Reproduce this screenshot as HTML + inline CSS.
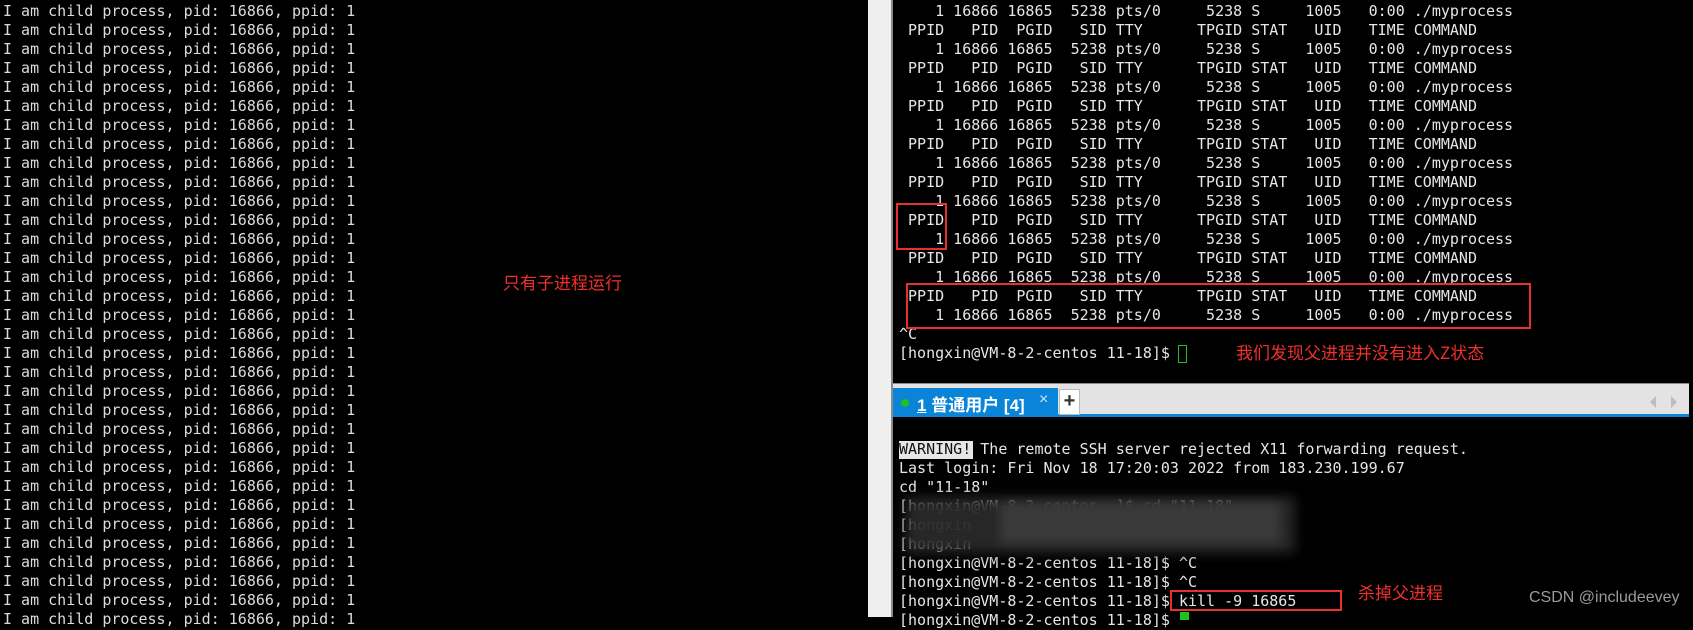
<!DOCTYPE html>
<html><head><meta charset="utf-8"><style>
body{margin:0;width:1693px;height:617px;background:#000;overflow:hidden;position:relative;font-family:"Liberation Sans","Noto Sans CJK SC",sans-serif}
.a{position:absolute}
.m{position:absolute;font:15px "DejaVu Sans Mono",monospace;color:#d8dde0;white-space:pre;line-height:19px}
.r{position:absolute;border:2px solid #e8302f;box-sizing:border-box}
.red{position:absolute;color:#f0302c;font-family:"Noto Sans CJK SC",sans-serif;white-space:nowrap;line-height:1}
</style></head><body>
<div id="left"></div>
<div class="a" style="left:868px;top:0;width:23px;height:617px;background:#efefef"></div>
<div class="a" style="left:891px;top:0;width:2px;height:617px;background:#8a8a8a"></div>
<div id="top"></div>
<div class="a" style="left:893px;top:383px;width:796px;height:31px;background:#e3e3e3;border-top:1px solid #8a8a8a"></div>
<div class="a" style="left:893px;top:414px;width:796px;height:3px;background:#0a84d8"></div>
<div class="a" style="left:893px;top:388px;width:165px;height:28px;background:#0a84d8"></div>
<div class="a" style="left:901px;top:399px;width:8px;height:8px;border-radius:50%;background:#1ec21e"></div>
<div class="a" style="left:917px;top:391px;color:#fff;font-size:17px;font-weight:bold;white-space:nowrap;font-family:'Liberation Sans','Noto Sans CJK SC',sans-serif"><u>1</u> 普通用户 [4]</div>
<div class="a" style="left:1039px;top:391px;color:#cfe6f8;font-size:16px">×</div>
<div class="a" style="left:1059px;top:389px;width:21px;height:26px;background:#fff;border:1px solid #bbb;box-sizing:border-box;font-size:20px;font-weight:bold;text-align:center;line-height:23px;color:#333">+</div>
<div class="a" style="left:1650px;top:396px;border-right:6px solid #bdbdbd;border-top:6px solid transparent;border-bottom:6px solid transparent"></div>
<div class="a" style="left:1671px;top:396px;border-left:6px solid #bdbdbd;border-top:6px solid transparent;border-bottom:6px solid transparent"></div>
<div class="a" style="left:899px;top:441px;width:74px;height:18px;background:#e6e6e6"></div>
<div id="bot"></div>
<div class="a" style="left:1178px;top:345px;width:9px;height:18px;border:1px solid #1ec21e;box-sizing:border-box"></div>
<div class="a" style="left:1180px;top:612px;width:9px;height:8px;background:#1ec21e"></div>
<div class="a" style="left:905px;top:497px;width:390px;height:56px;background:#2a2a2a;filter:blur(6px);opacity:.95"></div>
<div class="a" style="left:1000px;top:503px;width:280px;height:40px;background:#3a3a3a;filter:blur(5px)"></div>
<div class="r" style="left:896px;top:203px;width:51px;height:47px"></div>
<div class="r" style="left:906px;top:283px;width:625px;height:46px"></div>
<div class="r" style="left:1170px;top:590px;width:172px;height:21px"></div>
<div class="red" style="left:503px;top:273px;font-size:17px">只有子进程运行</div>
<div class="red" style="left:1236px;top:343px;font-size:17px">我们发现父进程并没有进入Z状态</div>
<div class="red" style="left:1358px;top:583px;font-size:17px">杀掉父进程</div>
<div class="a" style="left:1529px;top:589px;color:#9a9a9a;font-size:16px;white-space:nowrap">CSDN @includeevey</div>
<script>
var L='';for(var i=0;i<33;i++)L+='<div class="m" style="left:3px;top:'+(2+i*19)+'px">I am child process, pid: 16866, ppid: 1</div>';
document.getElementById('left').innerHTML=L;
var d='    1 16866 16865  5238 pts/0     5238 S     1005   0:00 ./myprocess',h=' PPID   PID  PGID   SID TTY      TPGID STAT   UID   TIME COMMAND';
var T='';for(var i=0;i<17;i++)T+='<div class="m" style="top:'+(2+i*19)+'px;left:899px;color:#e6e6e6">'+(i%2?h:d)+'</div>';
T+='<div class="m" style="top:325px;left:899px;color:#e6e6e6">^C</div><div class="m" style="top:344px;left:899px;color:#e6e6e6">[hongxin@VM-8-2-centos 11-18]$</div>';
document.getElementById('top').innerHTML=T;
var B=['WARNING! The remote SSH server rejected X11 forwarding request.','Last login: Fri Nov 18 17:20:03 2022 from 183.230.199.67','cd "11-18"','[hongxin@VM-8-2-centos ~]$ cd "11-18"','[hongxin','[hongxin','[hongxin@VM-8-2-centos 11-18]$ ^C','[hongxin@VM-8-2-centos 11-18]$ ^C','[hongxin@VM-8-2-centos 11-18]$ kill -9 16865','[hongxin@VM-8-2-centos 11-18]$'];
var S='';for(var i=0;i<B.length;i++)S+='<div class="m" style="top:'+(440+i*19)+'px;left:899px;color:#e6e6e6">'+B[i].replace('WARNING!','<span style="color:#111">WARNING!</span>')+'</div>';
document.getElementById('bot').innerHTML=S;
</script>
</body></html>
